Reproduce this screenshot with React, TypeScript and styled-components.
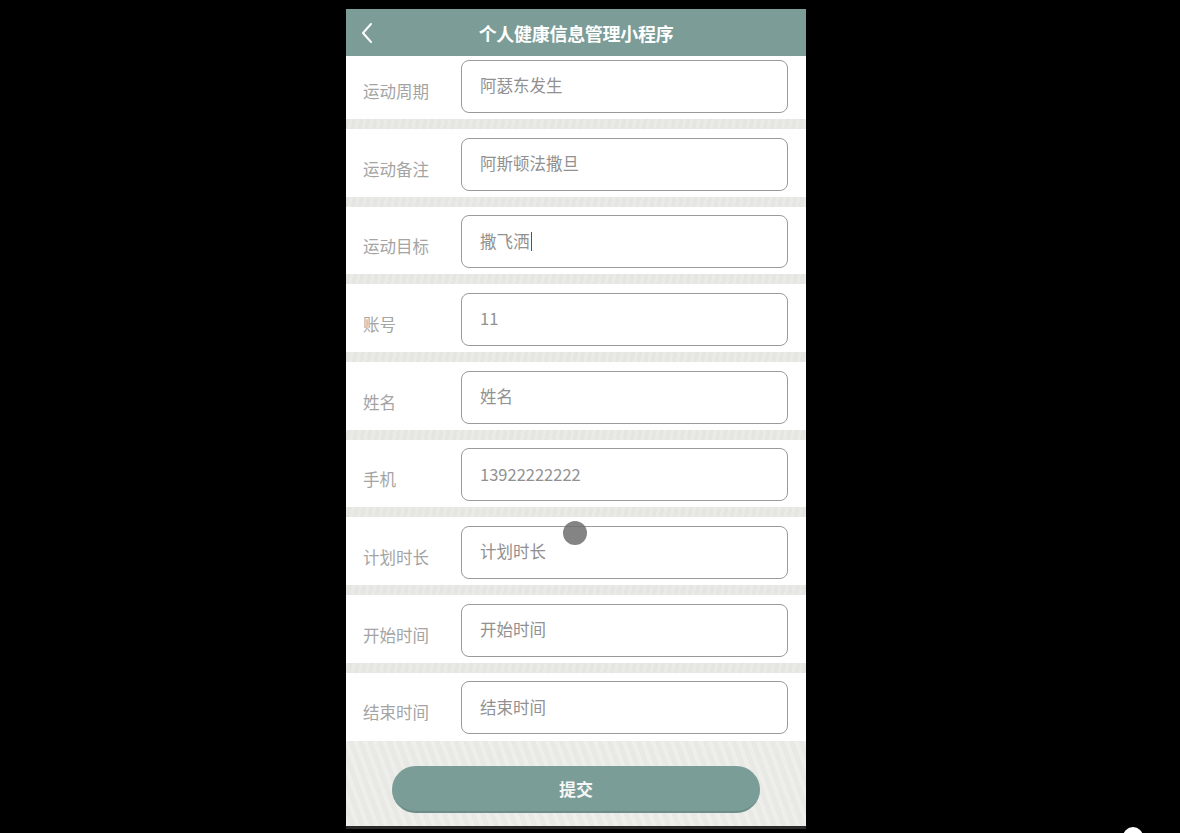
import React from "react";
import styled, { createGlobalStyle } from "styled-components";

const GlobalStyle = createGlobalStyle`
  html, body {
    margin: 0;
    padding: 0;
    background: #000;
  }
  body {
    font-family: "Noto Sans CJK SC", "Noto Sans", "Liberation Sans", sans-serif;
  }
`;

const Screen = styled.div`
  position: relative;
  width: 1180px;
  height: 833px;
  background: #000;
  overflow: hidden;
  display: flex;
  padding: 9px 0 0 346px;
  box-sizing: border-box;
`;

const Phone = styled.div`
  width: 460px;
  height: 817px;
  display: flex;
  flex-direction: column;
  background: #e9e9e5;
  border-bottom: 3px solid #2a2a2a;
  overflow: hidden;
`;

const Header = styled.div`
  position: relative;
  height: 47px;
  flex-shrink: 0;
  background: #7b9c97;
  display: flex;
  align-items: center;
  justify-content: center;
`;

const BackButton = styled.div`
  position: absolute;
  left: 14px;
  top: 13px;
  width: 14px;
  height: 22px;
  display: flex;
`;

const Title = styled.div`
  color: #fff;
  font-size: 18px;
  font-weight: 700;
  letter-spacing: -0.3px;
`;

const Form = styled.div`
  display: flex;
  flex-direction: column;
  gap: 10px;
  background: #e7e7e3;
  background-image: repeating-linear-gradient(
    100deg,
    rgba(255, 255, 255, 0.12) 0 3px,
    rgba(0, 0, 0, 0.008) 3px 7px
  );
`;

const Row = styled.div<{ first?: boolean }>`
  height: ${(p) => (p.first ? "63px" : "67.7px")};
  background: #fff;
  display: flex;
  align-items: flex-start;
  padding: ${(p) => (p.first ? "3.5px" : "8.5px")} 18px 0 17px;
  box-sizing: border-box;
`;

const Label = styled.div`
  width: 98px;
  flex-shrink: 0;
  color: #a4a4a4;
  font-size: 16.5px;
  line-height: 24px;
  padding-top: 19px;
`;

const Field = styled.div`
  flex: 1;
  height: 53px;
  border: 1.5px solid #9a9a9a;
  border-radius: 8px;
  box-sizing: border-box;
  padding: 0 18px;
  display: flex;
  align-items: center;
  color: #919191;
  font-size: 16.5px;
  line-height: 24px;
  padding-bottom: 2px;
`;

const Caret = styled.span`
  display: inline-block;
  width: 1px;
  height: 19px;
  background: #555;
  margin-left: 1px;
  vertical-align: -3px;
`;

const Footer = styled.div`
  flex: 1;
  display: flex;
  justify-content: center;
  padding-top: 25px;
  background: #ebebe7;
  background-image: repeating-linear-gradient(
    70deg,
    rgba(255, 255, 255, 0.14) 0 4px,
    rgba(0, 0, 0, 0.01) 4px 9px
  );
`;

const SubmitButton = styled.div`
  width: 368px;
  height: 47px;
  border-radius: 24px;
  background: #7a9d98;
  border-bottom: 2px solid #6b8c87;
  box-sizing: border-box;
  color: #f4f7f6;
  font-size: 17px;
  font-weight: 700;
  display: flex;
  align-items: center;
  justify-content: center;
`;

const TouchDot = styled.div`
  position: absolute;
  left: 563px;
  top: 521px;
  width: 24px;
  height: 24px;
  border-radius: 50%;
  background: rgba(110, 110, 110, 0.85);
`;

const CornerBlob = styled.div`
  position: absolute;
  left: 1123px;
  top: 827px;
  width: 20px;
  height: 20px;
  border-radius: 50%;
  background: #fff;
`;

const fields: { label: string; value: string; caret?: boolean }[] = [
  { label: "运动周期", value: "阿瑟东发生" },
  { label: "运动备注", value: "阿斯顿法撒旦" },
  { label: "运动目标", value: "撒飞洒", caret: true },
  { label: "账号", value: "11" },
  { label: "姓名", value: "姓名" },
  { label: "手机", value: "13922222222" },
  { label: "计划时长", value: "计划时长" },
  { label: "开始时间", value: "开始时间" },
  { label: "结束时间", value: "结束时间" },
];

export default function App() {
  return (
    <Screen>
      <GlobalStyle />
      <Phone>
        <Header>
          <BackButton>
            <svg width="14" height="22" viewBox="0 0 14 22" fill="none">
              <path d="M11 2 L3 11 L11 20" stroke="#fff" strokeWidth="2" strokeLinecap="round" strokeLinejoin="round" />
            </svg>
          </BackButton>
          <Title>个人健康信息管理小程序</Title>
        </Header>
        <Form>
          {fields.map((f, i) => (
            <Row key={f.label} first={i === 0}>
              <Label>{f.label}</Label>
              <Field>
                <span>
                  {f.value}
                  {f.caret && <Caret />}
                </span>
              </Field>
            </Row>
          ))}
        </Form>
        <Footer>
          <SubmitButton>提交</SubmitButton>
        </Footer>
      </Phone>
      <TouchDot />
      <CornerBlob />
    </Screen>
  );
}
